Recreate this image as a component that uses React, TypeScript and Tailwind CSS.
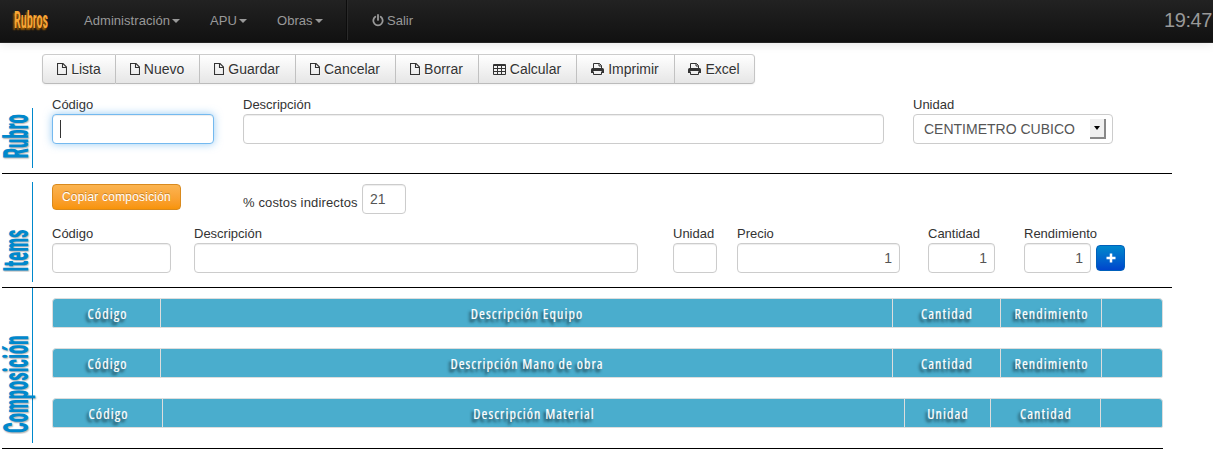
import React from "react";

type Kind = "file" | "table" | "print";

function Icon({ kind }: { kind: Kind }) {
  if (kind === "file")
    return (
      <svg width="10" height="12" viewBox="0 0 10 12" fill="none" stroke="#333" strokeWidth="1.100" className="mr-1 shrink-0">
        <path d="M.5.5h5.500l3.500 3.500v7.500h-9zM5.500.5v4h4" />
      </svg>
    );
  if (kind === "table")
    return (
      <svg width="13" height="11" viewBox="0 0 13 11" fill="none" stroke="#333" strokeWidth="1" className="mr-1 shrink-0">
        <path d="M.5.5h12v10H.5zM.5 1.500h12M.5 4.500h12M.5 7.500h12M4.500 1v9.500M8.500 1v9.500" />
      </svg>
    );
  return (
    <svg width="13" height="12" viewBox="0 0 13 12" className="mr-1 shrink-0">
      <path d="M2.500 6V.5h6l2 2V6M8 .5v2.500h2.500M2.500 8.500v3h8v-3" fill="none" stroke="#333" />
      <path fill="#333" d="M1.500 5h10Q13 5.200 13 6.700V10h-2V8H2v2H0V6.700Q0 5.200 1.500 5z" />
    </svg>
  );
}

const tools: { label: string; kind: Kind; w: string }[] = [
  { label: "Lista", kind: "file", w: "w-[74px]" },
  { label: "Nuevo", kind: "file", w: "w-[84px]" },
  { label: "Guardar", kind: "file", w: "w-[96px]" },
  { label: "Cancelar", kind: "file", w: "w-[100px]" },
  { label: "Borrar", kind: "file", w: "w-[83px]" },
  { label: "Calcular", kind: "table", w: "w-[98px]" },
  { label: "Imprimir", kind: "print", w: "w-[98px]" },
  { label: "Excel", kind: "print", w: "w-[80px]" },
];

function Field({ label, box, value = "", right = false, focus = false }: { label: string; box: string; value?: string; right?: boolean; focus?: boolean }) {
  return (
    <div className="flex shrink-0 flex-col">
      <label className="h-5 pt-px text-[13px] leading-5 whitespace-nowrap">{label}</label>
      <Box box={box} value={value} right={right} focus={focus} />
    </div>
  );
}

function Box({ box, value, right = false, focus = false }: { box: string; value: string; right?: boolean; focus?: boolean }) {
  const look = focus
    ? "border-[#74b9ef] shadow-[inset_0_1px_1px_rgba(0,0,0,0.075),0_0_8px_rgba(82,168,236,0.6)]"
    : "border-[#ccc] shadow-[inset_0_1px_1px_rgba(0,0,0,0.075)]";
  return (
    <div className={`flex h-[30px] shrink-0 items-center rounded-[4px] border bg-white px-[7px] text-[14px] text-[#555] ${look} ${right ? "justify-end" : ""} ${box}`}>
      {focus ? <span className="h-[18px] w-px bg-[#333]" /> : value}
    </div>
  );
}

function SideTitle({ text, box }: { text: string; box: string }) {
  return (
    <div className={`flex w-[30px] shrink-0 items-center justify-center ${box}`}>
      <span className="rotate-180 scale-y-[0.535] text-[35px] leading-[30px] font-extrabold whitespace-nowrap text-[#0088cc] [writing-mode:vertical-rl] [font-family:Roboto,sans-serif] [font-stretch:75%] [text-shadow:-2px_1px_2px_rgba(0,0,0,0.3)]">{text}</span>
    </div>
  );
}

function HeadRow({ cells }: { cells: { t: string; w: string }[] }) {
  return (
    <div className="flex h-[30px] w-[1111px] overflow-hidden rounded-t-[4px] rounded-b-[2px] border border-[#ddd] bg-[#4aadcd]">
      {cells.map((c, i) => (
        <div key={i} className={`flex h-[28px] shrink-0 items-center justify-center pt-[2px] ${i ? "border-l border-[#ddd] pl-px" : "pl-[2px]"} ${c.w}`}>
          <span className="text-[14px] leading-5 font-medium tracking-[1.1px] whitespace-nowrap text-white [font-family:'Open_Sans',sans-serif] [font-stretch:75%] [-webkit-text-stroke:0.2px_#fff] [text-shadow:-2px_3px_3px_rgba(0,0,0,0.75)]">{c.t}</span>
        </div>
      ))}
    </div>
  );
}

function Menu({ label, w }: { label: string; w: string }) {
  return (
    <div className={`flex shrink-0 items-center ${w}`}>
      {label}
      <span className="ml-[2px] border-x-4 border-t-4 border-x-transparent border-t-[#999]" />
    </div>
  );
}

export default function App() {
  return (
    <div className="h-[454px] w-[1213px] overflow-hidden bg-white text-[#333] [font-family:'Liberation_Sans',Arial,sans-serif]">
      <nav className="relative flex h-[43px] border-b border-[#252525] bg-linear-to-b from-[#222] to-[#111] text-[13px] text-[#999] shadow-[0_1px_10px_rgba(0,0,0,0.1)]">
        <div className="flex w-[84px] items-center">
          <span className="-mt-[3px] ml-[14px] origin-left scale-x-[0.58] scale-y-[1.15] text-[21px] leading-5 font-semibold text-[#f9a635] [font-family:Roboto,sans-serif] [font-stretch:75%] [text-shadow:-2px_2px_2px_#a66000]">Rubros</span>
        </div>
        <div className="flex h-[40px]">
          <div className="flex pt-px tracking-[0.05px]">
            <Menu label="Administración" w="w-[126px]" />
            <Menu label="APU" w="w-[67px]" />
            <Menu label="Obras" w="w-[69px]" />
          </div>
          <div className="w-[2px] border-r border-l border-l-[#0c0c0c] border-r-[#2a2a2a]" />
          <div className="ml-6 flex items-center pt-px">
            <svg width="12" height="13" viewBox="0 0 12 13" fill="none" stroke="#999" strokeWidth="1.800" strokeLinecap="round" className="mr-[3px]">
              <path d="M3.300 2.800a4.700 4.700 0 1 0 5.400 0M6 .9v5" />
            </svg>
            Salir
          </div>
        </div>
        <div className="ml-auto flex h-[40px] items-center pr-px text-[20px] tracking-[-0.4px]">19:47</div>
      </nav>

      <div className="mt-[11px] ml-[42px] flex">
        {tools.map((t, i) => (
          <div
            key={t.label}
            className={`flex h-[30px] shrink-0 items-center justify-center border-y border-r border-[#bbb] border-t-[#ccc] border-r-[#c5c5c5] bg-linear-to-b from-white to-[#e6e6e6] text-[14px] shadow-[0_1px_2px_rgba(0,0,0,0.05)] [text-shadow:0_1px_1px_rgba(255,255,255,0.75)] ${t.w} ${i === 0 ? "rounded-l-[4px] border-l border-l-[#c5c5c5]" : "pr-px"} ${i === tools.length - 1 ? "rounded-r-[4px]" : ""}`}
          >
            <Icon kind={t.kind} />
            {t.label}
          </div>
        ))}
      </div>

      <section className="ml-[2px] flex h-[90px] w-[1170px] border-b border-black pt-[10px]">
        <div className="mt-[14px] flex h-[60px] w-[31px] border-r border-[#0088cc]">
          <SideTitle text="Rubro" box="h-[56px]" />
        </div>
        <div className="ml-[19px] flex">
          <Field label="Código" box="w-[162px]" focus />
          <div className="ml-[29px]"><Field label="Descripción" box="w-[641px]" /></div>
          <div className="ml-[29px] flex flex-col">
            <label className="h-5 pt-px text-[13px] leading-5">Unidad</label>
            <div className="flex h-[30px] w-[200px] items-center justify-between rounded-[4px] border border-[#ccc] pr-[6px] pl-[10px] text-[14px] text-[#555]">
              CENTIMETRO CUBICO
              <span className="flex h-[20px] w-[16px] items-center justify-center border-r-2 border-b-2 border-[#888] bg-[#f0f0f0]">
                <span className="border-x-[3px] border-t-[4px] border-x-transparent border-t-black" />
              </span>
            </div>
          </div>
        </div>
      </section>

      <section className="ml-[2px] flex h-[114px] w-[1170px] border-b border-black pt-[8px]">
        <div className="flex h-[100px] w-[31px] border-r border-[#0088cc]">
          <SideTitle text="Items" box="h-[138px]" />
        </div>
        <div className="ml-[19px] pt-[2px]">
          <div className="flex h-[39px]">
            <div className="h-[26px] w-[129px] rounded-[4px] border border-[#d98a1e] bg-linear-to-b from-[#fbb450] to-[#f89406] text-center text-[12px] leading-6 tracking-[0.2px] text-white [text-shadow:0_-1px_0_rgba(0,0,0,0.25)]">Copiar composición</div>
            <span className="mt-[9px] ml-[62px] w-[119px] text-[13px] leading-5 tracking-[0.14px] whitespace-nowrap">% costos indirectos</span>
            <Box box="w-[44px]" value="21" />
          </div>
          <div className="flex">
            <Field label="Código" box="w-[119px]" />
            <div className="ml-[23px]"><Field label="Descripción" box="w-[444px]" /></div>
            <div className="ml-[35px]"><Field label="Unidad" box="w-[44px]" /></div>
            <div className="ml-[20px]"><Field label="Precio" box="w-[163px]" value="1" right /></div>
            <div className="ml-[28px]"><Field label="Cantidad" box="w-[67px]" value="1" right /></div>
            <div className="ml-[29px] w-[67px]"><Field label="Rendimiento" box="w-[67px]" value="1" right /></div>
            <div className="mt-[22px] ml-[5px] flex h-[26px] w-[29px] items-center justify-center rounded-[4px] border border-[#0060bb] bg-linear-to-b from-[#0088cc] to-[#0044cc]">
              <svg width="10" height="10" viewBox="0 0 10 10" stroke="#fff" strokeWidth="2.500"><path d="M5 .5v9M.5 5h9" /></svg>
            </div>
          </div>
        </div>
      </section>

      <section className="ml-[2px] flex h-[161px] w-[1161px] border-b border-black">
        <div className="flex h-[155px] w-[31px] border-r border-[#0088cc]">
          <SideTitle text="Composición" box="h-[192px]" />
        </div>
        <div className="ml-[19px] flex flex-col gap-5 pt-[10px]">
          {["Equipo", "Mano de obra"].map((n) => (
            <HeadRow key={n} cells={[{ t: "Código", w: "w-[107px]" }, { t: "Descripción " + n, w: "w-[732px]" }, { t: "Cantidad", w: "w-[108px]" }, { t: "Rendimiento", w: "w-[101px]" }, { t: "", w: "w-[61px]" }]} />
          ))}
          <HeadRow cells={[{ t: "Código", w: "w-[109px]" }, { t: "Descripción Material", w: "w-[742px]" }, { t: "Unidad", w: "w-[86px]" }, { t: "Cantidad", w: "w-[110px]" }, { t: "", w: "w-[62px]" }]} />
        </div>
      </section>
    </div>
  );
}
